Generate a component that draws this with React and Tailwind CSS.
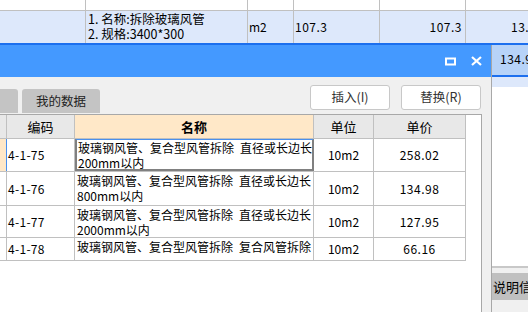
import React from 'react';

const font = "font-['Noto_Sans_CJK_SC',sans-serif]";

const rows = [
  { code: '4-1-75', l1: '玻璃钢风管、复合型风管拆除\u2002直径或长边长', l2: '200mm以内', unit: '10m2', price: '258.02', h: 'h-[33px]' },
  { code: '4-1-76', l1: '玻璃钢风管、复合型风管拆除\u2002直径或长边长', l2: '800mm以内', unit: '10m2', price: '134.98', h: 'h-[34px]' },
  { code: '4-1-77', l1: '玻璃钢风管、复合型风管拆除\u2002直径或长边长', l2: '2000mm以内', unit: '10m2', price: '127.95', h: 'h-[32px]' },
  { code: '4-1-78', l1: '玻璃钢风管、复合型风管拆除\u2002复合风管拆除', l2: null, unit: '10m2', price: '66.16', h: 'h-[23px]' },
];

function BackgroundSheet() {
  return (
    <div className="flex flex-col h-full text-[12px] text-black">
      <div className="flex h-[11px] border-b border-[#c0c0c0]">
        <div className="w-[86px] border-r border-[#c0c0c0]" />
        <div className="w-[162px] border-r border-[#c0c0c0]" />
        <div className="w-[46px] border-r border-[#c0c0c0]" />
        <div className="w-[86px] border-r border-[#c0c0c0]" />
        <div className="w-[86px] border-r border-[#c0c0c0]" />
        <div className="flex-1" />
      </div>
      <div className="flex h-[32px] bg-[#dde8fb]">
        <div className="w-[86px] border-r border-[#c0c0c0]" />
        <div className="w-[162px] border-r border-[#c0c0c0] pl-[2px] leading-[15px] text-[12.5px]">
          <div>1. 名称:拆除玻璃风管</div>
          <div>2. 规格:3400*300</div>
        </div>
        <div className="w-[46px] border-r border-[#c0c0c0] pl-[1px] pt-[9px] leading-[14px]">m2</div>
        <div className="w-[86px] border-r border-[#c0c0c0] pl-[1px] pt-[9px] leading-[14px] tracking-[0.5px]">107.3</div>
        <div className="w-[86px] border-r border-[#c0c0c0] pr-[3px] pt-[9px] leading-[14px] text-right tracking-[0.5px]">107.3</div>
        <div className="flex-1 overflow-hidden whitespace-nowrap pl-[45px] pt-[9px] leading-[14px] tracking-[0.5px]">13.</div>
      </div>
      <div className="h-[2px] bg-[#1c6fee]" />
      <div className="flex h-[30px] bg-[#b7d3f8]">
        <div className="w-[500px]" />
        <div className="flex-1 overflow-hidden whitespace-nowrap pt-[7px] leading-[14px] tracking-[0.5px]">134.98</div>
      </div>
      <div className="h-[2px] bg-[#1c6fee]" />
      <div className="h-[10px] bg-[#dde8fb]" />
      <div className="flex-1" />
      <div className="h-[46px] border-t-2 border-[#c8c8c8] bg-[#f0f0f0] pt-[5px] pl-[492px]">
        <div className="h-[27px] bg-[#c0c0c0] pl-[1px] leading-[27px] text-[13px] whitespace-nowrap overflow-hidden">说明信息</div>
      </div>
    </div>
  );
}

function TitleButtons() {
  return (
    <div className="flex items-center gap-[15px] pr-[9px]">
      <svg width="11" height="9" viewBox="0 0 11 9">
        <rect x="1" y="1.5" width="9" height="6" fill="none" stroke="#fff" strokeWidth="2" />
      </svg>
      <svg width="11" height="10" viewBox="0 0 11 10">
        <path d="M1 1 L10 9 M10 1 L1 9" stroke="#fff" strokeWidth="2.2" />
      </svg>
    </div>
  );
}

function Dialog() {
  return (
    <div className="absolute left-0 top-[45px] bottom-0 w-[492px] flex flex-col bg-[#f0f0f0] border-r border-[#a8a8a8]">
      <div className="h-[32px] bg-[#4499ff] flex items-center justify-end">
        <TitleButtons />
      </div>

      <div className="h-[36px] flex items-end justify-between">
        <div className="flex items-end gap-[4px] h-[24px]">
          <div className="w-[18px] h-[24px] bg-[#c4c4c4] rounded-tr-[3px]" />
          <div className="w-[78px] h-[24px] bg-[#c4c4c4] rounded-t-[3px] flex items-center justify-center text-[12.5px] text-[#222]">我的数据</div>
        </div>
        <div className="flex gap-[11px] self-start mt-[8px] pr-[10px]">
          <button className="w-[80px] h-[25px] bg-white border border-[#c8c8c8] rounded-[3px] text-[12.5px] text-[#333]">插入(I)</button>
          <button className="w-[80px] h-[25px] bg-white border border-[#c8c8c8] rounded-[3px] text-[12.5px] text-[#333]">替换(R)</button>
        </div>
      </div>

      <div className="flex-1 flex mt-[1px]">
        <div className="w-[482px] bg-white border-t border-r border-[#a8a8a8]">
          <Table />
        </div>
      </div>
    </div>
  );
}

function Table() {
  return (
    <div className="w-[466px] text-[12px] text-black">
      <div className="flex h-[24px] border-b border-[#c0c0c0] text-[13px]">
        <div className="w-[7px] bg-[#e8e8e8] border-r border-[#c0c0c0]" />
        <div className="w-[68px] bg-[#e8e8e8] border-r border-[#c0c0c0] flex items-center justify-center">编码</div>
        <div className="w-[239px] bg-[#ffe8c8] border-r border-[#c0c0c0] flex items-center justify-center font-bold">名称</div>
        <div className="w-[60px] bg-[#e8e8e8] border-r border-[#c0c0c0] flex items-center justify-center">单位</div>
        <div className="w-[92px] bg-[#e8e8e8] border-r border-[#c0c0c0] flex items-center justify-center">单价</div>
      </div>
      {rows.map((r, i) => (
        <div key={r.code} className={`flex ${r.h} border-b border-[#c0c0c0]`}>
          <div className={`w-[7px] border-r ${i === 0 ? 'bg-[#ffe8c8] border-[#4a90ee]' : 'border-[#c0c0c0]'}`} />
          <div className="w-[68px] border-r border-[#c0c0c0] flex items-center pl-[1px] tracking-[0.3px]">{r.code}</div>
          <div className={`w-[239px] leading-[15px] whitespace-nowrap overflow-hidden ${i === 0 ? 'border-t border-t-[#4a90ee] border-l-2 border-r-2 border-b-2 border-l-[#808080] border-r-[#808080] border-b-[#808080] pl-[1px]' : 'border-r border-[#c0c0c0] pl-[2px] pt-[1px]'}`}>
            <div>{r.l1}</div>
            {r.l2 && <div>{r.l2}</div>}
          </div>
          <div className="w-[60px] border-r border-[#c0c0c0] flex items-center justify-center">{r.unit}</div>
          <div className="w-[92px] border-r border-[#c0c0c0] flex items-center justify-center tracking-[0.5px]">{r.price}</div>
        </div>
      ))}
    </div>
  );
}

export default function App() {
  return (
    <div className={`relative w-[528px] h-[312px] overflow-hidden bg-white ${font}`}>
      <BackgroundSheet />
      <Dialog />
    </div>
  );
}
